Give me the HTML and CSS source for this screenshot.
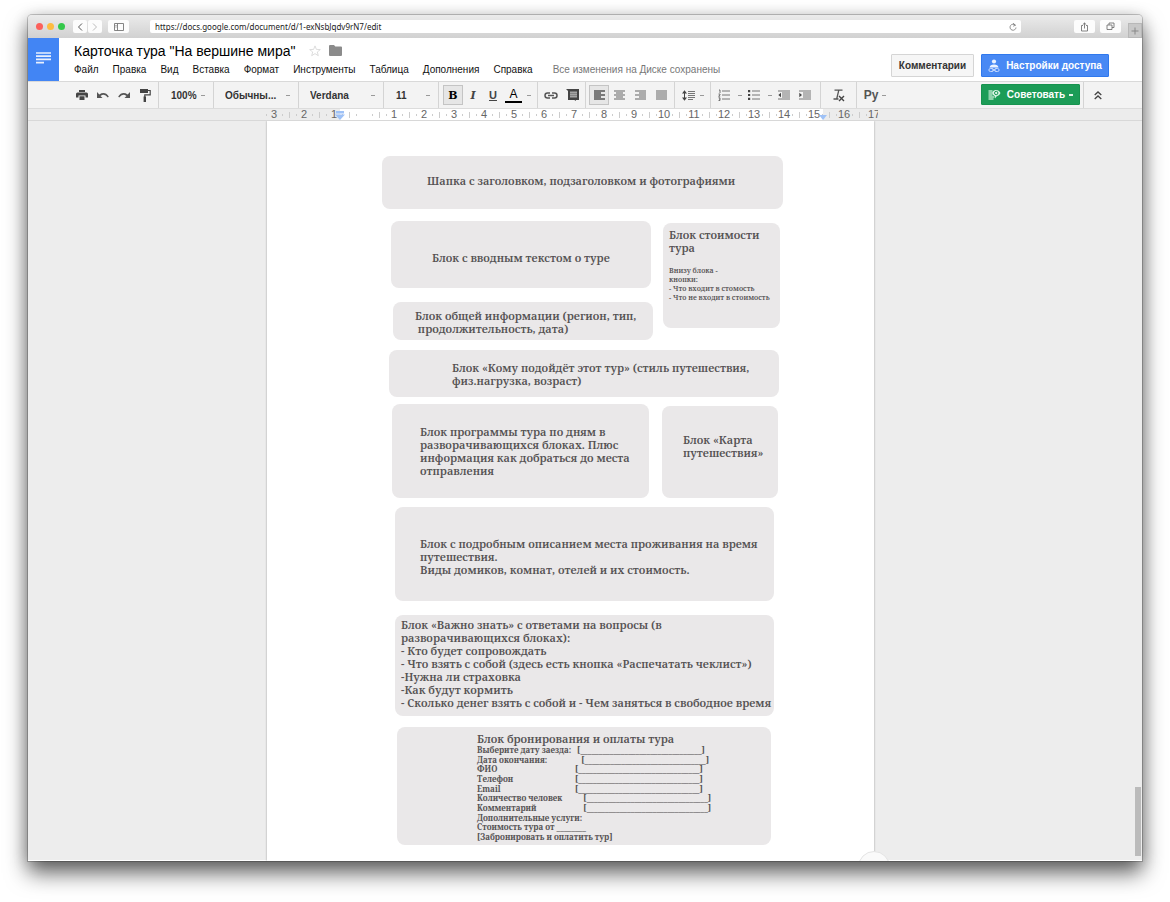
FILE: index.html
```html
<!DOCTYPE html>
<html lang="ru">
<head>
<meta charset="utf-8">
<title>Карточка тура "На вершине мира"</title>
<link rel="stylesheet" href="styles.css">
</head>
<body>
<div class="window">
  <div class="titlebar">
    <div class="lights"><i class="light red"></i><i class="light yellow"></i><i class="light green"></i></div>
    <div class="nav">
      <button class="chip" aria-label="Назад"><svg width="6" height="8" viewBox="0 0 6 8"><path d="M5 .5 1.500 4 5 7.500" fill="none" stroke="#555"/></svg></button>
      <button class="chip" aria-label="Вперёд"><svg width="6" height="8" viewBox="0 0 6 8"><path d="M1 .5 4.500 4 1 7.500" fill="none" stroke="#bbb"/></svg></button>
    </div>
    <button class="chip wide" aria-label="Боковая панель"><svg width="10" height="8" viewBox="0 0 10 8"><path d="M.5.5h9v7h-9zM3.500.5v7M1.500 2.500h1M1.500 4h1" fill="none" stroke="#777" stroke-width=".9"/></svg></button>
    <div class="address">
      <input class="url" type="text" aria-label="Адрес" value="https://docs.google.com/document/d/1-exNsbJqdv9rN7/edit">
      <button class="reload" aria-label="Обновить"><svg width="8" height="8" viewBox="0 0 8 8"><path d="M6.300 2.300A3 3 0 1 0 7 4.500M4 .2 6.500 2.200 4.200 3.200" fill="none" stroke="#777" stroke-width=".8"/></svg></button>
    </div>
    <button class="chip wide share" aria-label="Поделиться"><svg width="9" height="10" viewBox="0 0 9 10"><path d="M3 3.500H1.500v5.500h6V3.500H6M4.500 6.500V1M2.800 2.600 4.500 1l1.700 1.600" fill="none" stroke="#666" stroke-width=".8"/></svg></button>
    <button class="chip wide tabs" aria-label="Вкладки"><svg width="9" height="9" viewBox="0 0 9 9"><path d="M1 3h5v4.500H1zM3 3V1h5v4.500H6" fill="none" stroke="#666" stroke-width=".8"/></svg></button>
    <button class="newtab" aria-label="Новая вкладка"><svg width="8" height="8" viewBox="0 0 8 8"><path d="M4 .5v7M.5 4h7" stroke="#888" fill="none"/></svg></button>
  </div>

  <header class="header">
    <a class="logo" href="#" aria-label="Документы"><svg width="15" height="12" viewBox="0 0 15 12"><path d="M0 1h15M0 4.200h15M0 7.400h15M0 10.600h8" stroke="#e8f0fe" stroke-width="1.700"/></svg></a>
    <div class="heading">
      <div class="titlerow">
        <h1 class="title">Карточка тура "На вершине мира"</h1>
        <button class="icon" aria-label="Пометить"><svg width="12" height="12" viewBox="0 0 12 12"><path d="m6 .9 1.400 3.500 3.900.2-3 2.400 1 3.700L6 8.600l-3.300 2.100 1-3.700-3-2.400 3.900-.2z" fill="none" stroke="#d4d4d4" stroke-width=".8"/></svg></button>
        <button class="icon" aria-label="Папка"><svg width="13" height="11" viewBox="0 0 13 11"><path d="M0 1Q0 0 1 0h4l1.300 1.500H12q1 0 1 1V10q0 1-1 1H1q-1 0-1-1z" fill="#8b8b8b"/></svg></button>
      </div>
      <nav class="menu">
        <a href="#">Файл</a><a href="#">Правка</a><a href="#">Вид</a><a href="#">Вставка</a><a href="#">Формат</a><a href="#">Инструменты</a><a href="#">Таблица</a><a href="#">Дополнения</a><a href="#">Справка</a>
        <span class="status">Все изменения на Диске сохранены</span>
      </nav>
    </div>
    <div class="actions">
      <button class="btn comments">Комментарии</button>
      <button class="btn blue"><svg width="12" height="14" viewBox="0 0 12 14"><g fill="#eaf2ff"><circle cx="6" cy="2.500" r="2.100"/><path d="M1.500 8.500Q2 5.500 6 5.500t4.500 3z"/></g><g fill="none" stroke="#cfe0ff" stroke-width=".9"><rect x=".9" y="9.500" width="4.600" height="3" rx="1.500"/><rect x="6.500" y="9.500" width="4.600" height="3" rx="1.500"/><path d="M4 11h4"/></g></svg>Настройки доступа</button>
    </div>
  </header>

  <div class="toolbar">
    <div class="group first">
      <button class="tool" aria-label="Печать"><svg width="12" height="10" viewBox="0 0 12 10"><path d="M3 0h6v2H3zM1.500 2.500h9Q12 2.500 12 4v3.500H9.500V5.500h-7v2H0V4q0-1.500 1.500-1.500zM3.500 6.300h5V10h-5z" fill="#444"/></svg></button>
      <button class="tool" aria-label="Отменить"><svg width="12" height="8" viewBox="0 0 12 8"><path d="M0 1v6h5.500L3.500 5Q7.500 2 10.800 6.500l1-1Q8 0 2.300 3.400z" fill="#555"/></svg></button>
      <button class="tool" aria-label="Повторить"><svg width="12" height="8" viewBox="0 0 12 8"><path d="M12 1v6H6.500L8.500 5Q4.500 2 1.200 6.500l-1-1Q4 0 9.700 3.400z" fill="#555"/></svg></button>
      <button class="tool" aria-label="Копировать форматирование"><svg width="12" height="13" viewBox="0 0 12 13"><path d="M1 0h8v4H1z" fill="#444"/><path d="M9 1.500h2.200v4.300H5.800V8" fill="none" stroke="#444" stroke-width="1.200"/><path d="M4.600 7.500h2.400V13H4.600z" fill="#444"/></svg></button>
    </div>
    <div class="group zoom"><select class="pick" aria-label="Масштаб"><option>100%</option></select></div>
    <div class="group style"><select class="pick" aria-label="Стиль"><option>Обычны...</option></select></div>
    <div class="group font"><select class="pick" aria-label="Шрифт"><option>Verdana</option></select></div>
    <div class="group size"><select class="pick" aria-label="Размер"><option>11</option></select></div>
    <div class="group text">
      <button class="tool on letter b">B</button>
      <button class="tool letter i">I</button>
      <button class="tool letter u">U</button>
      <button class="tool letter a">A</button>
      <span class="dash"></span>
    </div>
    <div class="group insert">
      <button class="tool" aria-label="Ссылка"><svg width="14" height="7" viewBox="0 0 14 7"><g fill="none" stroke="#555" stroke-width="1.500"><path d="M6 1H3.500a2.500 2.500 0 0 0 0 5H6M8 1h2.500a2.500 2.500 0 0 1 0 5H8M4 3.500h6"/></g></svg></button>
      <button class="tool" aria-label="Комментарий"><svg width="13" height="12" viewBox="0 0 13 12"><path d="M0 0h13v11h-3l-.5 1-1-1H2V2z" fill="#444"/><path d="M4 2.500h7v6H4z" fill="#a5a5a5"/><path d="M4 4.500h7M4 6.500h7" stroke="#777" stroke-width=".7"/></svg></button>
    </div>
    <div class="group align">
      <button class="tool on" aria-label="По левому краю"><svg width="11" height="10" viewBox="0 0 11 10"><path d="M0 1h11M0 3h7M0 5h11M0 7h7M0 9h11" stroke="#555" stroke-width="1.300"/></svg></button>
      <button class="tool" aria-label="По центру"><svg width="11" height="10" viewBox="0 0 11 10"><path d="M0 1h11M2 3h7M0 5h11M2 7h7M0 9h11" stroke="#666" stroke-width="1.200"/></svg></button>
      <button class="tool" aria-label="По правому краю"><svg width="11" height="10" viewBox="0 0 11 10"><path d="M0 1h11M4 3h7M0 5h11M4 7h7M0 9h11" stroke="#666" stroke-width="1.200"/></svg></button>
      <button class="tool" aria-label="По ширине"><svg width="11" height="10" viewBox="0 0 11 10"><path d="M0 1h11M0 3h11M0 5h11M0 7h11M0 9h11" stroke="#666" stroke-width="1.200"/></svg></button>
    </div>
    <div class="group spacing">
      <button class="tool" aria-label="Интервал"><svg width="13" height="11" viewBox="0 0 13 11"><path d="M2.500 1.500v8" stroke="#444"/><path d="M0 3.500 2.500.3 5 3.500zM0 7.500l2.500 3.200L5 7.500z" fill="#444"/><path d="M6 1.500h7M6 3.500h7M6 5.500h7M6 7.500h7M6 9.500h5" stroke="#777" stroke-width="1.100"/></svg></button>
      <span class="dash"></span>
    </div>
    <div class="group lists">
      <button class="tool" aria-label="Нумерованный список"><svg width="12" height="12" viewBox="0 0 12 12"><path d="M1 1h1v3M.5 5h1.500v1L.6 7.200h1.600M.5 8.800H2v2.700H.5M1 10.100h1" fill="none" stroke="#555" stroke-width=".8"/><path d="M4 2h8M4 6h8M4 10h8" stroke="#777"/></svg></button>
      <span class="dash"></span>
      <button class="tool" aria-label="Маркированный список"><svg width="12" height="10" viewBox="0 0 12 10"><path d="M0 0h2.200v2.200H0zM0 3.900h2.200v2.200H0zM0 7.800h2.200V10H0z" fill="#444"/><path d="M4 1h8M4 5h8M4 9h8" stroke="#777"/></svg></button>
      <span class="dash"></span>
      <button class="tool" aria-label="Уменьшить отступ"><svg width="12" height="10" viewBox="0 0 12 10"><path d="M0 1h12M4 3h8M4 5h8M4 7h8M0 9h12" stroke="#777" stroke-width="1.200"/><path d="M3 2.700v4.600L.3 5z" fill="#444"/></svg></button>
      <button class="tool" aria-label="Увеличить отступ"><svg width="12" height="10" viewBox="0 0 12 10"><path d="M0 1h12M4 3h8M4 5h8M4 7h8M0 9h12" stroke="#777" stroke-width="1.200"/><path d="M.3 2.700v4.600L3 5z" fill="#444"/></svg></button>
    </div>
    <div class="group clear">
      <button class="tool" aria-label="Очистить форматирование"><svg width="13" height="13" viewBox="0 0 13 13"><path d="M2.500 1.200h8M6.800 1.200 4.800 9.500M1.500 10h5" fill="none" stroke="#555" stroke-width="1.300"/><path d="m7 7 5 5M12 7l-5 5" stroke="#444" stroke-width="1.400"/></svg></button>
    </div>
    <div class="group lang"><button class="tool letter">Ру</button><span class="dash"></span></div>
    <div class="mode">
      <button class="btn green"><svg width="13" height="12" viewBox="0 0 13 12"><path d="M.5 2h4M.5 4h3.500M.5 6h4M.5 8h6M.5 10h5" stroke="#b5e3c9" stroke-width="1.300"/><path d="M4 4Q5 1 8 1t4.500 3Q11.500 7 8.500 7.500L7 9.500V7.300Q4.700 6.500 4 4z" fill="#d9f2e4"/><circle cx="8.200" cy="4" r="1.700" fill="none" stroke="#1a9a55"/></svg>Советовать<span class="dash light-dash"></span></button>
    </div>
    <div class="group collapse"><button class="tool" aria-label="Свернуть"><svg width="8" height="9" viewBox="0 0 8 9"><path d="m.7 4 3.300-3 3.300 3M.7 8 4 5l3.300 3" fill="none" stroke="#444" stroke-width="1.300"/></svg></button></div>
  </div>

  <div class="ruler">
    <div class="scale">
      <span>3</span><span>2</span><span>1</span><span></span><span>1</span><span>2</span><span>3</span><span>4</span><span>5</span><span>6</span><span>7</span><span>8</span><span>9</span><span>10</span><span>11</span><span>12</span><span>13</span><span>14</span><span>15</span><span>16</span><span>17</span>
      <svg class="marker left" width="10" height="9" viewBox="0 0 10 9"><path d="M1 0h8v2.500H1zM0 3.500h10L5 9z" fill="#9fc2f7"/></svg>
      <svg class="marker right" width="8" height="5" viewBox="0 0 8 5"><path d="M0 0h8L4 5z" fill="#9fc2f7"/></svg>
    </div>
  </div>

  <main class="canvas">
    <article class="page">
      <section class="block top">Шапка с заголовком, подзаголовком и фотографиями</section>
      <div class="split intro">
        <div class="stack">
          <section class="block lead">Блок с вводным текстом о туре</section>
          <section class="block general">Блок общей информации (регион, тип,<br>&nbsp;продолжительность, дата)</section>
        </div>
        <section class="block price">Блок стоимости тура
          <p class="small">Внизу блока -<br>кнопки:<br>- Что входит в стомость<br>- Что не входит в стоимость</p>
        </section>
      </div>
      <section class="block who">Блок «Кому подойдёт этот тур» (стиль путешествия,<br>физ.нагрузка, возраст)</section>
      <div class="split plan">
        <section class="block program">Блок программы тура по дням в<br>разворачивающихся блоках. Плюс<br>информация как добраться до места<br>отправления</section>
        <section class="block map">Блок «Карта<br>путешествия»</section>
      </div>
      <section class="block stay">Блок с подробным описанием места проживания на время<br>путешествия.<br>Виды домиков, комнат, отелей и их стоимость.</section>
      <section class="block know">Блок «Важно знать» с ответами на вопросы (в<br>разворачивающихся блоках):<br>- Кто будет сопровождать<br>- Что взять с собой (здесь есть кнопка «Распечатать чеклист»)<br>-Нужна ли страховка<br>-Как будут кормить<br>- Сколько денег взять с собой и - Чем заняться в свободное время</section>
      <section class="block booking">Блок бронирования и оплаты тура
        <div class="lines">
          <p><span class="name">Выберите дату заезда:</span> [_________________________________]</p>
          <p><span class="name">Дата окончания:</span>   [_________________________________]</p>
          <p><span class="name">ФИО</span>[_________________________________]</p>
          <p><span class="name">Телефон</span>[_________________________________]</p>
          <p><span class="name">Email</span>[_________________________________]</p>
          <p><span class="name">Количество человек</span>    [_________________________________]</p>
          <p><span class="name">Комментарий</span>    [_________________________________]</p>
          <p>Дополнительные услуги:</p>
          <p>Стоимость тура от ________</p>
          <p>[Забронировать и оплатить тур]</p>
        </div>
      </section>
      <span class="bubble"></span>
    </article>
    <span class="thumb"></span>
  </main>
</div>
</body>
</html>
```
FILE: styles.css
```css
* { box-sizing: border-box; }
body {
  margin: 0;
  height: 100vh;
  padding: 15px 28px 41px;
  display: flex;
  background: #fff;
  font-family: "Liberation Sans", Arial, sans-serif;
  color: #222;
}
button, select, input { font: inherit; color: inherit; border: 0; padding: 0; margin: 0; background: none; }
button { display: flex; align-items: center; justify-content: center; flex: none; }
a { color: inherit; text-decoration: none; }
svg { display: block; flex: none; }
p, h1 { margin: 0; font: inherit; }

.window {
  flex: 1;
  min-width: 0;
  display: flex;
  flex-direction: column;
  overflow: hidden;
  border-radius: 4px 4px 0 0;
  background: #ededed;
  box-shadow: 0 0 0 1px rgba(0, 0, 0, .2), 0 12px 22px rgba(0, 0, 0, .6), 0 2px 16px rgba(0, 0, 0, .2);
}

.titlebar {
  flex: none;
  height: 23px;
  display: flex;
  align-items: center;
  padding-left: 8px;
  background: linear-gradient(#ebebeb, #d1d1d1);
}
.lights { display: flex; gap: 4px; width: 37px; }
.light { width: 7px; height: 7px; border-radius: 50%; }
.red { background: #fc605b; }
.yellow { background: #fdbc40; }
.green.light { background: #34c84a; }
.nav { display: flex; gap: 1px; margin-right: 6px; }
.chip { width: 14px; height: 13px; border-radius: 2px; background: #fcfcfc; }
.chip.wide { width: 21px; }
.address {
  flex: 1;
  display: flex;
  align-items: center;
  height: 13px;
  margin: 0 53px 0 21px;
  padding: 0 4px 0 5px;
  border-radius: 2px;
  background: #fff;
}
.url { flex: 1; height: 13px; font-family: "Noto Sans", sans-serif; font-size: 8px; }
.share { margin-right: 5px; }
.newtab { align-self: flex-end; width: 14px; height: 15px; margin-left: 7px; background: #c8c8c8; border: 1px solid #b8b8b8; }

.header { flex: none; height: 43px; display: flex; background: #fff; }
.logo { width: 31px; background: #4285f4; display: flex; align-items: center; justify-content: center; padding-bottom: 4px; }
.heading { flex: 1; padding: 3px 0 0 15px; white-space: nowrap; }
.titlerow { display: flex; align-items: center; height: 19px; gap: 14px; color: #000; }
.title { font-size: 14px; }
.titlerow .icon + .icon { margin-left: -6px; }
.menu { display: flex; align-items: center; gap: 14px; height: 19px; font-size: 10px; color: #111; }
.status { margin-left: 6px; color: #777; }
.actions { display: flex; align-items: center; gap: 7px; padding: 12px 33px 0 0; }
.btn { height: 23px; border: 1px solid #d5d5d5; background: #f6f6f6; font-size: 10px; font-weight: bold; color: #333; white-space: nowrap; border-radius: 1px; }
.btn.comments { width: 83px; }
.btn.blue { width: 128px; gap: 6px; background: #4889f4; border-color: #3079ed; color: #fff; }
.btn.green { width: 99px; height: 21px; gap: 6px; background: #1c9c57; border-color: #17934f; color: #fff; }
.header .btn { align-self: flex-start; margin-top: 4px; }

.toolbar { flex: none; height: 28px; display: flex; background: #f3f3f3; border-top: 1px solid #d9d9d9; border-bottom: 1px solid #dcdcdc; }
.group { display: flex; align-items: center; border-right: 1px solid #d4d4d4; }
.tool { height: 20px; }
.first { width: 131px; padding-left: 48px; gap: 9px; }
.pick {
  appearance: none;
  width: 100%;
  height: 20px;
  font-size: 11px;
  font-weight: bold;
  color: #333;
  background: linear-gradient(#999, #999) right 8px center / 4px 1px no-repeat;
}
.zoom { width: 55px; padding-left: 12px; }
.zoom .pick { font-size: 10px; }
.style { width: 85px; padding-left: 11px; }
.font { width: 85px; padding-left: 11px; }
.font .pick, .style .pick { font-size: 10px; }
.size { width: 55px; padding-left: 12px; }
.size .pick { font-size: 10px; }
.text { width: 99px; padding-left: 4px; }
.letter { width: 20px; font-size: 12px; color: #444; }
.on { width: 20px; background: #e6e6e6; border: 1px solid #c4c4c4; }
.b { font-family: "DejaVu Serif", serif; font-weight: bold; font-size: 11px; color: #000; }
.i { font-family: "DejaVu Serif", serif; font-style: italic; font-weight: bold; font-size: 11px; }
.u { text-decoration: underline; font-weight: bold; font-size: 11px; }
.a { width: 17px; height: 16px; margin-left: 2px; border-bottom: 2px solid #000; color: #000; }
.dash { width: 4px; height: 1px; margin-left: 5px; background: #999; }
.insert { width: 48px; padding-left: 6px; gap: 8px; }
.align { width: 89px; padding-left: 3px; gap: 10px; }
.align .on { margin-right: -5px; }
.spacing { width: 36px; padding-left: 7px; }
.lists { width: 110px; padding-left: 7px; }
.lists .dash { width: 4px; margin: 0 6px 0 8px; }
.lists .tool:last-child { margin-left: 9px; }
.clear { width: 36px; justify-content: center; }
.lang { border: 0; padding-left: 4px; }
.lang .letter { font-weight: bold; color: #555; }
.lang .dash { margin-left: 1px; }
.mode { margin-left: auto; padding: 2px 3px 0 0; }
.light-dash { height: 2px; margin-left: -2px; background: #dff3e7; }
.collapse { border: 0; border-left: 1px solid #d4d4d4; width: 59px; padding-left: 10px; }

.ruler { flex: none; height: 12px; display: flex; justify-content: center; padding-right: 33px; background: #ececec; border-bottom: 1px solid #d8d8d8; }
.scale {
  position: relative;
  display: grid;
  grid-template-columns: repeat(21, 30px);
  width: 619px;
  overflow: hidden;
  background: linear-gradient(#fff, #fff) 81px 0 / 483px 100% no-repeat;
}
.scale span {
  font-size: 11px;
  line-height: 11px;
  text-align: center;
  color: #666;
  background:
    linear-gradient(#ccc, #ccc) 0 3px / 1px 6px no-repeat,
    linear-gradient(#ccc, #ccc) 7px 5px / 1px 2px no-repeat,
    linear-gradient(#ccc, #ccc) 23px 5px / 1px 2px no-repeat;
}
.scale span:first-child { background-position: -9px 3px, 7px 5px, 23px 5px; }
.marker { position: absolute; }
.left { left: 76px; top: 2px; }
.right { left: 560px; top: 6px; }

.canvas {
  position: relative;
  flex: 1;
  min-height: 0;
  display: flex;
  justify-content: center;
  padding-right: 29px;
  overflow: hidden;
  box-shadow: inset 0 -1px #fff;
}
.page {
  position: relative;
  flex: 0 1 607px;
  padding: 35px 91px 0 115px;
  background: #fff;
  box-shadow: 0 0 2px rgba(0, 0, 0, .35);
  font-family: "Noto Serif", "Droid Serif", "DejaVu Serif", serif;
  font-size: 11px;
  font-weight: 600;
  line-height: 13px;
  color: #565354;
}
.block { border-radius: 8px; background: #eae8e9; white-space: nowrap; }
.top { height: 53px; padding: 18px 0 0 45px; }
.split { display: flex; justify-content: space-between; align-items: flex-start; }
.intro { margin: 12px 3px 0 9px; }
.lead { width: 260px; height: 67px; padding: 30px 0 0 41px; }
.general { width: 260px; margin: 14px 0 0 2px; padding: 7px 0 5px 22px; }
.price { width: 117px; height: 105px; margin-top: 2px; padding: 5px 0 0 6px; white-space: normal; }
.small { margin-top: 12px; font-size: 7px; line-height: 9px; white-space: nowrap; }
.who { height: 47px; margin: 10px 4px 0 7px; padding: 11px 0 0 63px; }
.plan { margin: 7px 5px 0 10px; }
.program { width: 257px; height: 94px; padding: 21px 0 0 28px; }
.map { width: 116px; height: 92px; margin-top: 2px; padding: 27px 0 0 21px; }
.stay { height: 94px; margin: 9px 9px 0 13px; padding: 30px 0 0 25px; }
.know { height: 101px; margin: 14px 9px 0 13px; padding: 3px 0 0 6px; }
.booking { height: 118px; margin: 11px 12px 0 15px; padding: 5px 0 0 80px; }
.lines {
  display: flex;
  flex-direction: column;
  justify-content: space-between;
  height: 96px;
  font-size: 8px;
  line-height: 9px;
  font-weight: bold;
  white-space: pre;
}
.name { display: inline-block; width: 98px; }
.bubble { position: absolute; right: -16px; bottom: -22px; width: 32px; height: 32px; border-radius: 50%; background: #fafafa; border: 1px solid #e4e4e4; }
.thumb { position: absolute; right: 1px; bottom: 5px; width: 6px; height: 69px; background: #bbb; }
```
